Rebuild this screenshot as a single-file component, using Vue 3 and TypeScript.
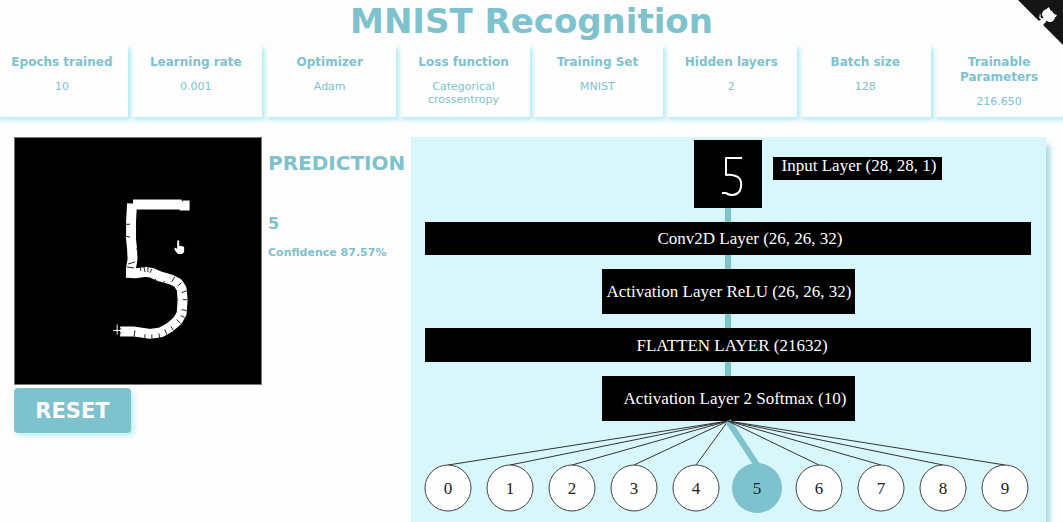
<script setup lang="ts">
interface Stat {
  label: string
  value: string
}

interface Layer {
  text: string
  x: number
  y: number
  width: number
  height: number
  textX: number
  textY: number
}

const stats: Stat[] = [
  { label: 'Epochs trained', value: '10' },
  { label: 'Learning rate', value: '0.001' },
  { label: 'Optimizer', value: 'Adam' },
  { label: 'Loss function', value: 'Categorical crossentropy' },
  { label: 'Training Set', value: 'MNIST' },
  { label: 'Hidden layers', value: '2' },
  { label: 'Batch size', value: '128' },
  { label: 'Trainable Parameters', value: '216.650' },
]

const layers: Layer[] = [
  { text: 'Input Layer (28, 28, 1)', x: 362, y: 20, width: 169, height: 23, textX: 448, textY: 34 },
  { text: 'Conv2D Layer (26, 26, 32)', x: 14, y: 85, width: 606, height: 33, textX: 339, textY: 107 },
  { text: 'Activation Layer ReLU (26, 26, 32)', x: 191, y: 132, width: 253, height: 45, textX: 318, textY: 160 },
  { text: 'FLATTEN LAYER (21632)', x: 14, y: 191, width: 606, height: 34, textX: 321, textY: 214 },
  { text: 'Activation Layer 2 Softmax (10)', x: 191, y: 239, width: 253, height: 45, textX: 324, textY: 267 },
]

const prediction = 5
const digits = Array.from({ length: 10 }, (_, n) => ({ n, x: 37 + n * 62 - Math.round(n / 9) }))
const hub = { x: 317, y: 284 }
</script>

<template>
  <main class="page">
    <h1 class="title">MNIST Recognition</h1>

    <a class="corner" href="#" aria-label="View source on GitHub">
      <svg viewBox="0 0 250 250" aria-hidden="true">
        <path class="corner-bg" d="M0,0 L115,115 L130,115 L142,142 L250,250 L250,0 Z" />
        <path
          class="corner-cat"
          d="M128.3,109 C113.8,99.7 119,89.6 119,89.6 C122,82.7 120.5,78.6 120.5,78.6 C119.2,72 123.4,76.3 123.4,76.3 C127.3,80.9 125.5,87.3 125.5,87.3 C122.9,97.6 130.6,101.9 134.4,103.2"
        />
        <path
          class="corner-cat"
          d="M115,115 C114.9,115.1 118.7,116.5 119.8,115.4 L133.7,101.6 C136.9,99.2 139.9,98.4 142.2,98.6 C133.8,88 127.5,74.4 143.8,58 C148.5,53.4 154,51.2 159.7,51 C160.3,49.4 163.2,43.6 171.4,40.1 C171.4,40.1 176.1,42.5 178.8,56.2 C183.1,58.6 187.2,61.8 190.9,65.4 C194.5,69 197.7,73.2 200.1,77.6 C213.8,80.2 216.3,84.9 216.3,84.9 C212.7,93.1 206.9,96 205.4,96.6 C205.1,102.4 203,107.8 198.3,112.5 C181.9,128.9 168.3,122.5 157.7,114.1 C157.9,116.9 156.7,120.9 152.7,124.9 L141,136.5 C139.8,137.7 141.6,141.9 141.8,141.8 Z"
        />
      </svg>
    </a>

    <section class="stats" aria-label="Model parameters">
      <article v-for="stat in stats" :key="stat.label" class="stat">
        <h2>{{ stat.label }}</h2>
        <p>{{ stat.value }}</p>
      </article>
    </section>

    <div class="workspace">
      <section class="drawing">
        <svg class="pad" viewBox="0 0 248 248" role="img" aria-label="Drawing area with a handwritten 5">
          <g class="ink">
            <path d="M119 67H168M166 68H176" />
            <path d="M118 66L117 84L117 102L118 112L118.500 122L117 131V139" />
            <path d="M112 136L121 136.500L132 135L138 136L146 139.500L158 143L164 146L168 152L169 163L168 177L164 184L156 191L147 196L136 197.500L126 196L119 195H106" />
          </g>
          <path
            class="cuts"
            d="M168 61l1 3M112 87h4M112 99l4 1M122 112h3M114 127l7-2M113 130l7 1M126 130l1 4M130 130l1 5M134 130v5M138 132l-2 4M140 145l2-3M149 147l2-3M161 140l-3 5M168 146l-4 3M173 154l-5 2M174 163h-5M173 174l-5-1M171 181l-4-2M167 187l-4-4M160 194l-3-4M153 198l-2-5M146 202l-1-5M138 203v-5M131 202v-4M120 200l1-6M104 190l3 3M104 199l3-3"
          />
          <path class="spark" d="M103 188v10M99 194h8" />
          <path
            class="hand"
            d="M163.500 103.500q1-1 2 0v5l2 .5 2 .5 1 .5v5l-2 2h-4l-3-3-1-3q1-1 3 1z"
          />
        </svg>
        <button class="reset" type="button">RESET</button>
      </section>

      <section class="result" aria-live="polite">
        <h2>PREDICTION</h2>
        <p class="digit">{{ prediction }}</p>
        <p class="confidence">Confidence 87.57%</p>
      </section>

      <section class="network">
        <svg viewBox="0 0 635 400" role="img" aria-label="Neural network layers">
          <path class="trunk" d="M317 71V240" />
          <rect class="box" x="283" y="3" width="68" height="68" />
          <path class="mini" d="M331 21H315V38Q321 37 327 40Q331 43 330 50Q329 57 322 58Q317 58 315 56H311" />

          <template v-for="layer in layers" :key="layer.text">
            <rect class="box" :x="layer.x" :y="layer.y" :width="layer.width" :height="layer.height" />
            <text class="layer-text" :x="layer.textX" :y="layer.textY">{{ layer.text }}</text>
          </template>

          <line
            v-for="d in digits"
            :key="`l${d.n}`"
            :class="['link', { active: d.n === prediction }]"
            :x1="hub.x"
            :y1="hub.y"
            :x2="d.x"
            :y2="328"
          />
          <g v-for="d in digits" :key="d.n" :class="['node', { active: d.n === prediction }]">
            <circle :cx="d.x" cy="351" :r="d.n === prediction ? 25 : 23" />
            <text :x="d.x" y="357">{{ d.n }}</text>
          </g>
        </svg>
      </section>
    </div>
  </main>
</template>

<style>
body {
  margin: 0;
  background: #fdfdfd;
}
</style>

<style scoped>
.page {
  --teal: #7dc2cd;
  height: 100vh;
  overflow: hidden;
  position: relative;
  background: #fdfdfd;
  color: var(--teal);
  font-family: 'DejaVu Sans', sans-serif;
}

h1,
h2,
p {
  margin: 0;
}

.title {
  text-align: center;
  font-size: 34px;
  line-height: 42px;
}

.corner {
  position: absolute;
  top: 0;
  right: 0;
  width: 45px;
  height: 45px;
}

.corner svg {
  display: block;
}

.corner-bg {
  fill: #151515;
}

.corner-cat {
  fill: #fdfdfd;
}

.stats {
  display: grid;
  grid-template-columns: repeat(8, 1fr);
  column-gap: 2px;
  margin: 3px -2px 0 -4px;
}

.stat {
  padding: 10px 8px 9px;
  text-align: center;
  box-shadow: 3px 3px 4px #b4ecf2;
}

.stat h2 {
  font-size: 12px;
  line-height: 15px;
}

.stat p {
  margin-top: 10px;
  font-size: 11px;
  line-height: 13px;
}

.workspace {
  display: flex;
  align-items: flex-start;
  padding: 20px 17px 0 14px;
}

.drawing {
  flex: 0 0 248px;
}

.pad {
  display: block;
  width: 100%;
  box-sizing: border-box;
  background: #000;
  border: 1px solid #777;
}

.ink {
  fill: none;
  stroke: #fdfdfd;
  stroke-width: 10;
  stroke-linejoin: bevel;
}

.cuts {
  fill: none;
  stroke: #222;
  stroke-width: 1;
}

.spark {
  fill: none;
  stroke: #fdfdfd;
  stroke-width: 1;
}

.hand {
  fill: #fdfdfd;
}

.reset {
  display: block;
  margin-top: 3px;
  padding: 0;
  width: 117px;
  height: 45px;
  border: 0;
  border-radius: 4px;
  background: var(--teal);
  color: #fdfdfd;
  box-shadow: 3px 3px 5px #bdf1f6;
  font: bold 21px 'DejaVu Sans', sans-serif;
}

.result {
  flex: 0 0 143px;
  box-sizing: border-box;
  margin-left: 6px;
  padding-top: 14px;
  white-space: nowrap;
}

.result h2 {
  font-size: 20px;
  line-height: 24px;
}

.digit {
  margin-top: 38px;
  font-size: 16px;
  font-weight: bold;
  line-height: 22px;
}

.confidence {
  margin-top: 10px;
  font-size: 11px;
  font-weight: bold;
  line-height: 16px;
}

.network {
  flex: 1;
  min-width: 0;
  background: #d8f7fb;
  box-shadow: 4px 8px 5px #a6dbe3;
}

.network svg {
  display: block;
  width: 100%;
}

.trunk {
  stroke: #7dc2cd;
  stroke-width: 6;
}

.box {
  fill: #000;
}

.mini {
  fill: none;
  stroke: #fdfdfd;
  stroke-width: 2;
  stroke-linejoin: round;
}

.layer-text,
.node text {
  font-family: 'Liberation Serif', serif;
  font-size: 17px;
  text-anchor: middle;
}

.layer-text {
  fill: #fdfdfd;
}

.link {
  stroke: #333;
  stroke-width: 1;
}

.link.active {
  stroke: #7dc2cd;
  stroke-width: 6;
}

.node circle {
  fill: #fdfdfd;
  stroke: #444;
}

.node text {
  fill: #222;
}

.node.active circle {
  fill: #7dc2cd;
  stroke: none;
}
</style>
